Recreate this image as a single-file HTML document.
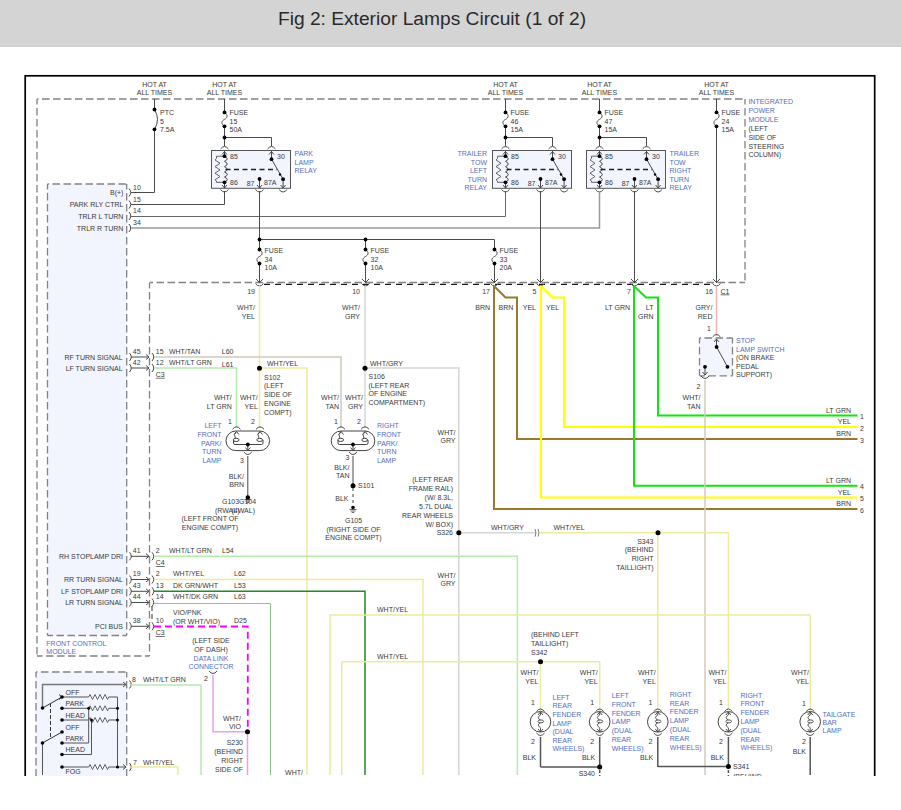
<!DOCTYPE html>
<html><head><meta charset="utf-8">
<style>
html,body{margin:0;padding:0;background:#fff;width:901px;height:810px;overflow:hidden}
#hdr{position:absolute;left:0;top:0;width:901px;height:46px;background:#d4d4d4;border-bottom:1px solid #cdcdcd}
#hdr div{position:absolute;left:0;width:864px;top:8px;line-height:22px;text-align:center;font-family:"Liberation Sans",sans-serif;font-size:19.2px;color:#2a2a2a}
#dg{position:absolute;left:0;top:0;width:901px;height:810px;background:#fff}
#clip{position:absolute;left:0;top:46px;width:901px;height:730px;overflow:hidden}
svg text{font-family:"Liberation Sans",sans-serif}
</style></head><body>
<div id="hdr"><div>Fig 2: Exterior Lamps Circuit (1 of 2)</div></div>
<div id="clip"><svg width="901" height="810" viewBox="0 0 901 810" style="position:absolute;left:0;top:-46px">
<rect x="25.2" y="75.8" width="849.5" height="760" fill="none" stroke="#000" stroke-width="1.7"/>
<line x1="37" y1="99" x2="745" y2="99" stroke="#828282" stroke-width="1.3" stroke-dasharray="7.5,3.5" stroke-dashoffset="6"/>
<line x1="37" y1="99" x2="37" y2="656" stroke="#828282" stroke-width="1.3" stroke-dasharray="7.5,3.5" stroke-dashoffset="2"/>
<line x1="745" y1="99" x2="745" y2="283" stroke="#828282" stroke-width="1.3" stroke-dasharray="7.5,3.5" stroke-dashoffset="2"/>
<line x1="745" y1="282.5" x2="149.5" y2="282.5" stroke="#828282" stroke-width="1.3" stroke-dasharray="7.5,3.5" stroke-dashoffset="2"/>
<line x1="264" y1="284.3" x2="712" y2="284.3" stroke="#1a1a1a" stroke-width="1.3" stroke-dasharray="6,5"/>
<line x1="149.5" y1="283" x2="149.5" y2="656" stroke="#828282" stroke-width="1.3" stroke-dasharray="7.5,3.5" stroke-dashoffset="2"/>
<line x1="37" y1="656" x2="149.5" y2="656" stroke="#828282" stroke-width="1.3" stroke-dasharray="7.5,3.5" stroke-dashoffset="2"/>
<rect x="47.5" y="184" width="79.2" height="451.5" fill="#f2f4fe" stroke="none" stroke-width="0"/>
<line x1="47.5" y1="184" x2="126.7" y2="184" stroke="#828282" stroke-width="1.3" stroke-dasharray="7.5,3.5" stroke-dashoffset="6"/>
<line x1="47.5" y1="184" x2="47.5" y2="635.5" stroke="#828282" stroke-width="1.3" stroke-dasharray="7.5,3.5" stroke-dashoffset="2"/>
<line x1="126.7" y1="184" x2="126.7" y2="635.5" stroke="#828282" stroke-width="1.3" stroke-dasharray="7.5,3.5" stroke-dashoffset="2"/>
<line x1="47.5" y1="635.5" x2="126.7" y2="635.5" stroke="#828282" stroke-width="1.3" stroke-dasharray="7.5,3.5" stroke-dashoffset="2"/>
<rect x="36" y="672" width="90.7" height="140" fill="#f2f4fe" stroke="none" stroke-width="0"/>
<line x1="36" y1="672" x2="126.7" y2="672" stroke="#828282" stroke-width="1.3" stroke-dasharray="7.5,3.5" stroke-dashoffset="6"/>
<line x1="36" y1="672" x2="36" y2="812" stroke="#828282" stroke-width="1.3" stroke-dasharray="7.5,3.5" stroke-dashoffset="2"/>
<line x1="126.7" y1="672" x2="126.7" y2="812" stroke="#828282" stroke-width="1.3" stroke-dasharray="7.5,3.5" stroke-dashoffset="2"/>
<line x1="36" y1="812" x2="126.7" y2="812" stroke="#828282" stroke-width="1.3" stroke-dasharray="7.5,3.5" stroke-dashoffset="2"/>
<rect x="699.5" y="338" width="33.0" height="37.80000000000001" fill="#f2f4fe" stroke="none" stroke-width="0"/>
<line x1="699.5" y1="338" x2="732.5" y2="338" stroke="#828282" stroke-width="1.3" stroke-dasharray="7.5,3.5" stroke-dashoffset="6"/>
<line x1="699.5" y1="338" x2="699.5" y2="375.8" stroke="#828282" stroke-width="1.3" stroke-dasharray="7.5,3.5" stroke-dashoffset="2"/>
<line x1="732.5" y1="338" x2="732.5" y2="375.8" stroke="#828282" stroke-width="1.3" stroke-dasharray="7.5,3.5" stroke-dashoffset="2"/>
<line x1="699.5" y1="375.8" x2="732.5" y2="375.8" stroke="#828282" stroke-width="1.3" stroke-dasharray="7.5,3.5" stroke-dashoffset="2"/>
<text x="154.5" y="87.0" text-anchor="middle" fill="#3a3a3a" font-size="7">HOT AT</text>
<text x="154.5" y="95.0" text-anchor="middle" fill="#3a3a3a" font-size="7">ALL TIMES</text>
<line x1="154.5" y1="99" x2="154.5" y2="109.5" stroke="#4a4a4a" stroke-width="1"/>
<text x="224.5" y="87.0" text-anchor="middle" fill="#3a3a3a" font-size="7">HOT AT</text>
<text x="224.5" y="95.0" text-anchor="middle" fill="#3a3a3a" font-size="7">ALL TIMES</text>
<line x1="224.5" y1="99" x2="224.5" y2="112.4" stroke="#4a4a4a" stroke-width="1"/>
<text x="505.5" y="87.0" text-anchor="middle" fill="#3a3a3a" font-size="7">HOT AT</text>
<text x="505.5" y="95.0" text-anchor="middle" fill="#3a3a3a" font-size="7">ALL TIMES</text>
<line x1="505.5" y1="99" x2="505.5" y2="112.4" stroke="#4a4a4a" stroke-width="1"/>
<text x="599.5" y="87.0" text-anchor="middle" fill="#3a3a3a" font-size="7">HOT AT</text>
<text x="599.5" y="95.0" text-anchor="middle" fill="#3a3a3a" font-size="7">ALL TIMES</text>
<line x1="599.5" y1="99" x2="599.5" y2="112.4" stroke="#4a4a4a" stroke-width="1"/>
<text x="716.5" y="87.0" text-anchor="middle" fill="#3a3a3a" font-size="7">HOT AT</text>
<text x="716.5" y="95.0" text-anchor="middle" fill="#3a3a3a" font-size="7">ALL TIMES</text>
<line x1="716.5" y1="99" x2="716.5" y2="112.4" stroke="#4a4a4a" stroke-width="1"/>
<path d="M154.5,109.5 Q160.5,119.4 154.5,129.3" fill="none" stroke="#4a4a4a" stroke-width="1"/>
<text x="160" y="115.0" text-anchor="start" fill="#3a3a3a" font-size="7">PTC</text>
<text x="160" y="123.5" text-anchor="start" fill="#3a3a3a" font-size="7">5</text>
<text x="160" y="132.0" text-anchor="start" fill="#3a3a3a" font-size="7">7.5A</text>
<polyline points="154.5,129.3 154.5,192.5 131,192.5" fill="none" stroke="#4a4a4a" stroke-width="1"/>
<path d="M224.5,112.4 C228.3,114.9 227.5,117.85 224.5,119.35 C221.5,120.85 220.7,123.8 224.5,126.3" fill="none" stroke="#4a4a4a" stroke-width="1"/>
<text x="229.5" y="115.0" text-anchor="start" fill="#3a3a3a" font-size="7">FUSE</text>
<text x="229.5" y="123.5" text-anchor="start" fill="#3a3a3a" font-size="7">15</text>
<text x="229.5" y="132.0" text-anchor="start" fill="#3a3a3a" font-size="7">50A</text>
<path d="M505.5,112.4 C509.3,114.9 508.5,117.85 505.5,119.35 C502.5,120.85 501.7,123.8 505.5,126.3" fill="none" stroke="#4a4a4a" stroke-width="1"/>
<text x="510.5" y="115.0" text-anchor="start" fill="#3a3a3a" font-size="7">FUSE</text>
<text x="510.5" y="123.5" text-anchor="start" fill="#3a3a3a" font-size="7">46</text>
<text x="510.5" y="132.0" text-anchor="start" fill="#3a3a3a" font-size="7">15A</text>
<path d="M599.5,112.4 C603.3,114.9 602.5,117.85 599.5,119.35 C596.5,120.85 595.7,123.8 599.5,126.3" fill="none" stroke="#4a4a4a" stroke-width="1"/>
<text x="604.5" y="115.0" text-anchor="start" fill="#3a3a3a" font-size="7">FUSE</text>
<text x="604.5" y="123.5" text-anchor="start" fill="#3a3a3a" font-size="7">47</text>
<text x="604.5" y="132.0" text-anchor="start" fill="#3a3a3a" font-size="7">15A</text>
<path d="M716.5,112.4 C720.3,114.9 719.5,117.85 716.5,119.35 C713.5,120.85 712.7,123.8 716.5,126.3" fill="none" stroke="#4a4a4a" stroke-width="1"/>
<text x="721.5" y="115.0" text-anchor="start" fill="#3a3a3a" font-size="7">FUSE</text>
<text x="721.5" y="123.5" text-anchor="start" fill="#3a3a3a" font-size="7">24</text>
<text x="721.5" y="132.0" text-anchor="start" fill="#3a3a3a" font-size="7">15A</text>
<rect x="211.5" y="150.5" width="79" height="37.8" fill="#f2f4fe" stroke="#555" stroke-width="1"/>
<line x1="224.5" y1="126.3" x2="224.5" y2="146" stroke="#4a4a4a" stroke-width="1"/>
<polyline points="224.5,137.5 271.5,137.5 271.5,146" fill="none" stroke="#4a4a4a" stroke-width="1"/>
<path d="M220.5,149 Q224.5,144 228.5,149" fill="none" stroke="#4a4a4a" stroke-width="1"/>
<path d="M267.5,149 Q271.5,144 275.5,149" fill="none" stroke="#4a4a4a" stroke-width="1"/>
<line x1="224.5" y1="150.5" x2="224.5" y2="156.2" stroke="#4a4a4a" stroke-width="1"/>
<line x1="224.5" y1="182.3" x2="224.5" y2="188.3" stroke="#4a4a4a" stroke-width="1"/>
<polyline points="222.0,154.5 224.5,151.5 227.0,154.5" fill="none" stroke="#4a4a4a" stroke-width="1"/>
<polyline points="222.0,185 224.5,188 227.0,185" fill="none" stroke="#4a4a4a" stroke-width="1"/>
<polyline points="224.5,156.2 216.5,156.2 216.5,158.5 215.0,160.0 220.0,163.3 215.0,166.6 220.0,169.9 215.0,173.2 220.0,176.5 215.0,179.8 216.5,181 216.5,182.3 224.5,182.3" fill="none" stroke="#555" stroke-width="0.9"/>
<path d="M224.5,156.2 q5.5,2.6 0,5.22 q5.5,2.6 0,5.22 q5.5,2.6 0,5.22 q5.5,2.6 0,5.22 q5.5,2.6 0,5.22" fill="none" stroke="#444" stroke-width="1"/>
<line x1="225.5" y1="169.6" x2="277.0" y2="169.6" stroke="#222" stroke-width="1.5" stroke-dasharray="5,3.5"/>
<line x1="271.5" y1="150.5" x2="271.5" y2="159.2" stroke="#4a4a4a" stroke-width="1"/>
<polyline points="269.0,154.5 271.5,151.5 274.0,154.5" fill="none" stroke="#4a4a4a" stroke-width="1"/>
<line x1="271.5" y1="159.2" x2="283.1" y2="179.2" stroke="#4a4a4a" stroke-width="1"/>
<line x1="283.1" y1="179.2" x2="283.1" y2="188" stroke="#4a4a4a" stroke-width="1"/>
<polyline points="280.6,185 283.1,188 285.6,185" fill="none" stroke="#4a4a4a" stroke-width="1"/>
<line x1="259.5" y1="179" x2="259.5" y2="188" stroke="#4a4a4a" stroke-width="1"/>
<polyline points="257.0,185 259.5,188 262.0,185" fill="none" stroke="#4a4a4a" stroke-width="1"/>
<path d="M220.5,189.5 Q224.5,194.5 228.5,189.5" fill="none" stroke="#4a4a4a" stroke-width="1"/>
<path d="M255.5,189.5 Q259.5,194.5 263.5,189.5" fill="none" stroke="#4a4a4a" stroke-width="1"/>
<path d="M279.1,189.5 Q283.1,194.5 287.1,189.5" fill="none" stroke="#4a4a4a" stroke-width="1"/>
<text x="230.0" y="158.8" text-anchor="start" fill="#3a3a3a" font-size="7">85</text>
<text x="230.0" y="184.8" text-anchor="start" fill="#3a3a3a" font-size="7">86</text>
<text x="277.0" y="159.1" text-anchor="start" fill="#3a3a3a" font-size="7">30</text>
<text x="254.5" y="185.8" text-anchor="end" fill="#3a3a3a" font-size="7">87</text>
<text x="264.0" y="185.0" text-anchor="start" fill="#3a3a3a" font-size="7">87A</text>
<text x="294.5" y="156.2" text-anchor="start" fill="#5270c0" font-size="7">PARK</text>
<text x="294.5" y="164.7" text-anchor="start" fill="#5270c0" font-size="7">LAMP</text>
<text x="294.5" y="173.2" text-anchor="start" fill="#5270c0" font-size="7">RELAY</text>
<rect x="492.5" y="150.5" width="79" height="37.8" fill="#f2f4fe" stroke="#555" stroke-width="1"/>
<line x1="505.5" y1="126.3" x2="505.5" y2="146" stroke="#4a4a4a" stroke-width="1"/>
<polyline points="505.5,137.5 552.5,137.5 552.5,146" fill="none" stroke="#4a4a4a" stroke-width="1"/>
<path d="M501.5,149 Q505.5,144 509.5,149" fill="none" stroke="#4a4a4a" stroke-width="1"/>
<path d="M548.5,149 Q552.5,144 556.5,149" fill="none" stroke="#4a4a4a" stroke-width="1"/>
<line x1="505.5" y1="150.5" x2="505.5" y2="156.2" stroke="#4a4a4a" stroke-width="1"/>
<line x1="505.5" y1="182.3" x2="505.5" y2="188.3" stroke="#4a4a4a" stroke-width="1"/>
<polyline points="503.0,154.5 505.5,151.5 508.0,154.5" fill="none" stroke="#4a4a4a" stroke-width="1"/>
<polyline points="503.0,185 505.5,188 508.0,185" fill="none" stroke="#4a4a4a" stroke-width="1"/>
<polyline points="505.5,156.2 497.5,156.2 497.5,158.5 496.0,160.0 501.0,163.3 496.0,166.6 501.0,169.9 496.0,173.2 501.0,176.5 496.0,179.8 497.5,181 497.5,182.3 505.5,182.3" fill="none" stroke="#555" stroke-width="0.9"/>
<path d="M505.5,156.2 q5.5,2.6 0,5.22 q5.5,2.6 0,5.22 q5.5,2.6 0,5.22 q5.5,2.6 0,5.22 q5.5,2.6 0,5.22" fill="none" stroke="#444" stroke-width="1"/>
<line x1="506.5" y1="169.6" x2="558.0" y2="169.6" stroke="#222" stroke-width="1.5" stroke-dasharray="5,3.5"/>
<line x1="552.5" y1="150.5" x2="552.5" y2="159.2" stroke="#4a4a4a" stroke-width="1"/>
<polyline points="550.0,154.5 552.5,151.5 555.0,154.5" fill="none" stroke="#4a4a4a" stroke-width="1"/>
<line x1="552.5" y1="159.2" x2="564.1" y2="179.2" stroke="#4a4a4a" stroke-width="1"/>
<line x1="564.1" y1="179.2" x2="564.1" y2="188" stroke="#4a4a4a" stroke-width="1"/>
<polyline points="561.6,185 564.1,188 566.6,185" fill="none" stroke="#4a4a4a" stroke-width="1"/>
<line x1="540.5" y1="179" x2="540.5" y2="188" stroke="#4a4a4a" stroke-width="1"/>
<polyline points="538.0,185 540.5,188 543.0,185" fill="none" stroke="#4a4a4a" stroke-width="1"/>
<path d="M501.5,189.5 Q505.5,194.5 509.5,189.5" fill="none" stroke="#4a4a4a" stroke-width="1"/>
<path d="M536.5,189.5 Q540.5,194.5 544.5,189.5" fill="none" stroke="#4a4a4a" stroke-width="1"/>
<path d="M560.1,189.5 Q564.1,194.5 568.1,189.5" fill="none" stroke="#4a4a4a" stroke-width="1"/>
<text x="511.0" y="158.8" text-anchor="start" fill="#3a3a3a" font-size="7">85</text>
<text x="511.0" y="184.8" text-anchor="start" fill="#3a3a3a" font-size="7">86</text>
<text x="558.0" y="159.1" text-anchor="start" fill="#3a3a3a" font-size="7">30</text>
<text x="535.5" y="185.8" text-anchor="end" fill="#3a3a3a" font-size="7">87</text>
<text x="545.0" y="185.0" text-anchor="start" fill="#3a3a3a" font-size="7">87A</text>
<text x="487" y="156.2" text-anchor="end" fill="#5270c0" font-size="7">TRAILER</text>
<text x="487" y="164.7" text-anchor="end" fill="#5270c0" font-size="7">TOW</text>
<text x="487" y="173.2" text-anchor="end" fill="#5270c0" font-size="7">LEFT</text>
<text x="487" y="181.7" text-anchor="end" fill="#5270c0" font-size="7">TURN</text>
<text x="487" y="190.2" text-anchor="end" fill="#5270c0" font-size="7">RELAY</text>
<rect x="586.5" y="150.5" width="79" height="37.8" fill="#f2f4fe" stroke="#555" stroke-width="1"/>
<line x1="599.5" y1="126.3" x2="599.5" y2="146" stroke="#4a4a4a" stroke-width="1"/>
<polyline points="599.5,137.5 646.5,137.5 646.5,146" fill="none" stroke="#4a4a4a" stroke-width="1"/>
<path d="M595.5,149 Q599.5,144 603.5,149" fill="none" stroke="#4a4a4a" stroke-width="1"/>
<path d="M642.5,149 Q646.5,144 650.5,149" fill="none" stroke="#4a4a4a" stroke-width="1"/>
<line x1="599.5" y1="150.5" x2="599.5" y2="156.2" stroke="#4a4a4a" stroke-width="1"/>
<line x1="599.5" y1="182.3" x2="599.5" y2="188.3" stroke="#4a4a4a" stroke-width="1"/>
<polyline points="597.0,154.5 599.5,151.5 602.0,154.5" fill="none" stroke="#4a4a4a" stroke-width="1"/>
<polyline points="597.0,185 599.5,188 602.0,185" fill="none" stroke="#4a4a4a" stroke-width="1"/>
<polyline points="599.5,156.2 591.5,156.2 591.5,158.5 590.0,160.0 595.0,163.3 590.0,166.6 595.0,169.9 590.0,173.2 595.0,176.5 590.0,179.8 591.5,181 591.5,182.3 599.5,182.3" fill="none" stroke="#555" stroke-width="0.9"/>
<path d="M599.5,156.2 q5.5,2.6 0,5.22 q5.5,2.6 0,5.22 q5.5,2.6 0,5.22 q5.5,2.6 0,5.22 q5.5,2.6 0,5.22" fill="none" stroke="#444" stroke-width="1"/>
<line x1="600.5" y1="169.6" x2="652.0" y2="169.6" stroke="#222" stroke-width="1.5" stroke-dasharray="5,3.5"/>
<line x1="646.5" y1="150.5" x2="646.5" y2="159.2" stroke="#4a4a4a" stroke-width="1"/>
<polyline points="644.0,154.5 646.5,151.5 649.0,154.5" fill="none" stroke="#4a4a4a" stroke-width="1"/>
<line x1="646.5" y1="159.2" x2="658.1" y2="179.2" stroke="#4a4a4a" stroke-width="1"/>
<line x1="658.1" y1="179.2" x2="658.1" y2="188" stroke="#4a4a4a" stroke-width="1"/>
<polyline points="655.6,185 658.1,188 660.6,185" fill="none" stroke="#4a4a4a" stroke-width="1"/>
<line x1="634.5" y1="179" x2="634.5" y2="188" stroke="#4a4a4a" stroke-width="1"/>
<polyline points="632.0,185 634.5,188 637.0,185" fill="none" stroke="#4a4a4a" stroke-width="1"/>
<path d="M595.5,189.5 Q599.5,194.5 603.5,189.5" fill="none" stroke="#4a4a4a" stroke-width="1"/>
<path d="M630.5,189.5 Q634.5,194.5 638.5,189.5" fill="none" stroke="#4a4a4a" stroke-width="1"/>
<path d="M654.1,189.5 Q658.1,194.5 662.1,189.5" fill="none" stroke="#4a4a4a" stroke-width="1"/>
<text x="605.0" y="158.8" text-anchor="start" fill="#3a3a3a" font-size="7">85</text>
<text x="605.0" y="184.8" text-anchor="start" fill="#3a3a3a" font-size="7">86</text>
<text x="652.0" y="159.1" text-anchor="start" fill="#3a3a3a" font-size="7">30</text>
<text x="629.5" y="185.8" text-anchor="end" fill="#3a3a3a" font-size="7">87</text>
<text x="639.0" y="185.0" text-anchor="start" fill="#3a3a3a" font-size="7">87A</text>
<text x="669.5" y="156.2" text-anchor="start" fill="#5270c0" font-size="7">TRAILER</text>
<text x="669.5" y="164.7" text-anchor="start" fill="#5270c0" font-size="7">TOW</text>
<text x="669.5" y="173.2" text-anchor="start" fill="#5270c0" font-size="7">RIGHT</text>
<text x="669.5" y="181.7" text-anchor="start" fill="#5270c0" font-size="7">TURN</text>
<text x="669.5" y="190.2" text-anchor="start" fill="#5270c0" font-size="7">RELAY</text>
<text x="748.4" y="104.0" text-anchor="start" fill="#5270c0" font-size="7">INTEGRATED</text>
<text x="748.4" y="112.9" text-anchor="start" fill="#5270c0" font-size="7">POWER</text>
<text x="748.4" y="121.8" text-anchor="start" fill="#5270c0" font-size="7">MODULE</text>
<text x="748.4" y="130.7" text-anchor="start" fill="#3a3a3a" font-size="7">(LEFT</text>
<text x="748.4" y="139.6" text-anchor="start" fill="#3a3a3a" font-size="7">SIDE OF</text>
<text x="748.4" y="148.5" text-anchor="start" fill="#3a3a3a" font-size="7">STEERING</text>
<text x="748.4" y="157.4" text-anchor="start" fill="#3a3a3a" font-size="7">COLUMN)</text>
<text x="123.4" y="195.0" text-anchor="end" fill="#3a3a3a" font-size="7">B(+)</text>
<path d="M129,188.5 Q132.5,192.5 129,196.5" fill="none" stroke="#4a4a4a" stroke-width="1"/>
<text x="133" y="189.5" text-anchor="start" fill="#3a3a3a" font-size="7">10</text>
<text x="123.4" y="207.0" text-anchor="end" fill="#3a3a3a" font-size="7">PARK RLY CTRL</text>
<path d="M129,200.5 Q132.5,204.5 129,208.5" fill="none" stroke="#4a4a4a" stroke-width="1"/>
<text x="133" y="201.5" text-anchor="start" fill="#3a3a3a" font-size="7">15</text>
<text x="123.4" y="218.5" text-anchor="end" fill="#3a3a3a" font-size="7">TRLR L TURN</text>
<path d="M129,212 Q132.5,216 129,220" fill="none" stroke="#4a4a4a" stroke-width="1"/>
<text x="133" y="213.0" text-anchor="start" fill="#3a3a3a" font-size="7">14</text>
<text x="123.4" y="230.5" text-anchor="end" fill="#3a3a3a" font-size="7">TRLR R TURN</text>
<path d="M129,224 Q132.5,228 129,232" fill="none" stroke="#4a4a4a" stroke-width="1"/>
<text x="133" y="225.0" text-anchor="start" fill="#3a3a3a" font-size="7">34</text>
<polyline points="131,204.5 224.5,204.5 224.5,191" fill="none" stroke="#4a4a4a" stroke-width="1"/>
<polyline points="131,216.5 505.5,216.5 505.5,191" fill="none" stroke="#666" stroke-width="1"/>
<polyline points="131,228 599.5,228 599.5,191" fill="none" stroke="#999" stroke-width="1.5"/>
<line x1="259.5" y1="191" x2="259.5" y2="249.5" stroke="#4a4a4a" stroke-width="1"/>
<line x1="259.5" y1="263.5" x2="259.5" y2="283" stroke="#4a4a4a" stroke-width="1"/>
<polyline points="259.5,239.5 494.5,239.5 494.5,249.5" fill="none" stroke="#4a4a4a" stroke-width="1"/>
<line x1="494.5" y1="263.5" x2="494.5" y2="283" stroke="#4a4a4a" stroke-width="1"/>
<line x1="365.5" y1="239.5" x2="365.5" y2="249.5" stroke="#4a4a4a" stroke-width="1"/>
<line x1="365.5" y1="263.5" x2="365.5" y2="283" stroke="#4a4a4a" stroke-width="1"/>
<path d="M259.5,249.5 C263.3,252.0 262.5,255.0 259.5,256.5 C256.5,258.0 255.7,261.0 259.5,263.5" fill="none" stroke="#4a4a4a" stroke-width="1"/>
<text x="264.5" y="253.0" text-anchor="start" fill="#3a3a3a" font-size="7">FUSE</text>
<text x="264.5" y="261.5" text-anchor="start" fill="#3a3a3a" font-size="7">34</text>
<text x="264.5" y="270.0" text-anchor="start" fill="#3a3a3a" font-size="7">10A</text>
<polyline points="256.0,279.0 259.5,282.5 263.0,279.0" fill="none" stroke="#4a4a4a" stroke-width="1"/>
<path d="M255.5,283.5 Q259.5,288.5 263.5,283.5" fill="none" stroke="#4a4a4a" stroke-width="1"/>
<path d="M365.5,249.5 C369.3,252.0 368.5,255.0 365.5,256.5 C362.5,258.0 361.7,261.0 365.5,263.5" fill="none" stroke="#4a4a4a" stroke-width="1"/>
<text x="370.5" y="253.0" text-anchor="start" fill="#3a3a3a" font-size="7">FUSE</text>
<text x="370.5" y="261.5" text-anchor="start" fill="#3a3a3a" font-size="7">32</text>
<text x="370.5" y="270.0" text-anchor="start" fill="#3a3a3a" font-size="7">10A</text>
<polyline points="362.0,279.0 365.5,282.5 369.0,279.0" fill="none" stroke="#4a4a4a" stroke-width="1"/>
<path d="M361.5,283.5 Q365.5,288.5 369.5,283.5" fill="none" stroke="#4a4a4a" stroke-width="1"/>
<path d="M494.5,249.5 C498.3,252.0 497.5,255.0 494.5,256.5 C491.5,258.0 490.7,261.0 494.5,263.5" fill="none" stroke="#4a4a4a" stroke-width="1"/>
<text x="499.5" y="253.0" text-anchor="start" fill="#3a3a3a" font-size="7">FUSE</text>
<text x="499.5" y="261.5" text-anchor="start" fill="#3a3a3a" font-size="7">33</text>
<text x="499.5" y="270.0" text-anchor="start" fill="#3a3a3a" font-size="7">20A</text>
<polyline points="491.0,279.0 494.5,282.5 498.0,279.0" fill="none" stroke="#4a4a4a" stroke-width="1"/>
<path d="M490.5,283.5 Q494.5,288.5 498.5,283.5" fill="none" stroke="#4a4a4a" stroke-width="1"/>
<line x1="540.5" y1="191" x2="540.5" y2="283" stroke="#4a4a4a" stroke-width="1"/>
<polyline points="537.0,279.0 540.5,282.5 544.0,279.0" fill="none" stroke="#4a4a4a" stroke-width="1"/>
<path d="M536.5,283.5 Q540.5,288.5 544.5,283.5" fill="none" stroke="#4a4a4a" stroke-width="1"/>
<line x1="634.5" y1="191" x2="634.5" y2="283" stroke="#4a4a4a" stroke-width="1"/>
<polyline points="631.0,279.0 634.5,282.5 638.0,279.0" fill="none" stroke="#4a4a4a" stroke-width="1"/>
<path d="M630.5,283.5 Q634.5,288.5 638.5,283.5" fill="none" stroke="#4a4a4a" stroke-width="1"/>
<line x1="716.5" y1="126.3" x2="716.5" y2="283" stroke="#4a4a4a" stroke-width="1"/>
<polyline points="713.0,279.0 716.5,282.5 720.0,279.0" fill="none" stroke="#4a4a4a" stroke-width="1"/>
<path d="M712.5,283.5 Q716.5,288.5 720.5,283.5" fill="none" stroke="#4a4a4a" stroke-width="1"/>
<text x="255" y="293.5" text-anchor="end" fill="#3a3a3a" font-size="7">19</text>
<text x="360" y="293.5" text-anchor="end" fill="#3a3a3a" font-size="7">10</text>
<text x="490" y="293.5" text-anchor="end" fill="#3a3a3a" font-size="7">17</text>
<text x="536.5" y="293.5" text-anchor="end" fill="#3a3a3a" font-size="7">5</text>
<text x="631" y="293.5" text-anchor="end" fill="#3a3a3a" font-size="7">7</text>
<text x="713" y="293.5" text-anchor="end" fill="#3a3a3a" font-size="7">16</text>
<text x="720.5" y="293.5" text-anchor="start" fill="#3a3a3a" font-size="7" text-decoration="underline">C1</text>
<line x1="259.5" y1="286" x2="259.5" y2="368" stroke="#ecec9c" stroke-width="1.5"/>
<line x1="365" y1="286" x2="365" y2="368" stroke="#d6d6d6" stroke-width="1.5"/>
<polyline points="494,286 494,509 857.5,509" fill="none" stroke="#9a7a2a" stroke-width="2"/>
<polyline points="494,286 505.5,297.5 517,297.5 517,439 857.5,439" fill="none" stroke="#9a7a2a" stroke-width="2"/>
<polyline points="541,286 541,497.5 857.5,497.5" fill="none" stroke="#ffff00" stroke-width="2"/>
<polyline points="541,286 552.5,297.5 564,297.5 564,427 857.5,427" fill="none" stroke="#ffff00" stroke-width="2"/>
<polyline points="634,286 634,485.8 857.5,485.8" fill="none" stroke="#0be80b" stroke-width="2"/>
<polyline points="634,286 646,297.5 658,297.5 658,415.5 857.5,415.5" fill="none" stroke="#0be80b" stroke-width="2"/>
<text x="851" y="412.5" text-anchor="end" fill="#3a3a3a" font-size="7">LT GRN</text>
<text x="860" y="419.0" text-anchor="start" fill="#3a3a3a" font-size="7">1</text>
<text x="851" y="424.0" text-anchor="end" fill="#3a3a3a" font-size="7">YEL</text>
<text x="860" y="430.5" text-anchor="start" fill="#3a3a3a" font-size="7">2</text>
<text x="851" y="436.0" text-anchor="end" fill="#3a3a3a" font-size="7">BRN</text>
<text x="860" y="442.5" text-anchor="start" fill="#3a3a3a" font-size="7">3</text>
<text x="851" y="482.8" text-anchor="end" fill="#3a3a3a" font-size="7">LT GRN</text>
<text x="860" y="489.3" text-anchor="start" fill="#3a3a3a" font-size="7">4</text>
<text x="851" y="494.5" text-anchor="end" fill="#3a3a3a" font-size="7">YEL</text>
<text x="860" y="501.0" text-anchor="start" fill="#3a3a3a" font-size="7">5</text>
<text x="851" y="506.0" text-anchor="end" fill="#3a3a3a" font-size="7">BRN</text>
<text x="860" y="512.5" text-anchor="start" fill="#3a3a3a" font-size="7">6</text>
<text x="490" y="310.0" text-anchor="end" fill="#3a3a3a" font-size="7">BRN</text>
<text x="498.5" y="310.0" text-anchor="start" fill="#3a3a3a" font-size="7">BRN</text>
<text x="536" y="310.0" text-anchor="end" fill="#3a3a3a" font-size="7">YEL</text>
<text x="546" y="310.0" text-anchor="start" fill="#3a3a3a" font-size="7">YEL</text>
<text x="630" y="310.0" text-anchor="end" fill="#3a3a3a" font-size="7">LT GRN</text>
<text x="653.5" y="310.0" text-anchor="end" fill="#3a3a3a" font-size="7">LT</text>
<text x="653.5" y="318.8" text-anchor="end" fill="#3a3a3a" font-size="7">GRN</text>
<text x="255" y="310.0" text-anchor="end" fill="#3a3a3a" font-size="7">WHT/</text>
<text x="255" y="318.8" text-anchor="end" fill="#3a3a3a" font-size="7">YEL</text>
<text x="360" y="310.0" text-anchor="end" fill="#3a3a3a" font-size="7">WHT/</text>
<text x="360" y="318.5" text-anchor="end" fill="#3a3a3a" font-size="7">GRY</text>
<text x="712.5" y="310.0" text-anchor="end" fill="#3a3a3a" font-size="7">GRY/</text>
<text x="712.5" y="318.5" text-anchor="end" fill="#3a3a3a" font-size="7">RED</text>
<line x1="716.5" y1="286" x2="716.5" y2="336" stroke="#f0b4b4" stroke-width="1.5"/>
<text x="711" y="331.0" text-anchor="end" fill="#3a3a3a" font-size="7">1</text>
<path d="M712.5,337 Q716.5,332 720.5,337" fill="none" stroke="#4a4a4a" stroke-width="1"/>
<polyline points="714.0,342 716.5,339 719.0,342" fill="none" stroke="#4a4a4a" stroke-width="1"/>
<line x1="716.5" y1="339" x2="716.5" y2="347" stroke="#4a4a4a" stroke-width="1"/>
<line x1="716.6" y1="347" x2="727.5" y2="366.8" stroke="#4a4a4a" stroke-width="1"/>
<line x1="705" y1="366.8" x2="705" y2="375" stroke="#4a4a4a" stroke-width="1"/>
<polyline points="702.5,372 705,375 707.5,372" fill="none" stroke="#4a4a4a" stroke-width="1"/>
<path d="M701,376 Q705,381 709,376" fill="none" stroke="#4a4a4a" stroke-width="1"/>
<text x="736" y="343.0" text-anchor="start" fill="#5270c0" font-size="7">STOP</text>
<text x="736" y="351.6" text-anchor="start" fill="#5270c0" font-size="7">LAMP SWITCH</text>
<text x="736" y="360.2" text-anchor="start" fill="#3a3a3a" font-size="7">(ON BRAKE</text>
<text x="736" y="368.8" text-anchor="start" fill="#3a3a3a" font-size="7">PEDAL</text>
<text x="736" y="377.4" text-anchor="start" fill="#3a3a3a" font-size="7">SUPPORT)</text>
<text x="700.5" y="389.0" text-anchor="end" fill="#3a3a3a" font-size="7">2</text>
<text x="700.5" y="400.0" text-anchor="end" fill="#3a3a3a" font-size="7">WHT/</text>
<text x="700.5" y="408.8" text-anchor="end" fill="#3a3a3a" font-size="7">TAN</text>
<line x1="705" y1="380" x2="705" y2="775" stroke="#d2cabb" stroke-width="1.5"/>
<text x="122.7" y="359.5" text-anchor="end" fill="#3a3a3a" font-size="7">RF TURN SIGNAL</text>
<path d="M129.5,353 Q133.0,357 129.5,361" fill="none" stroke="#4a4a4a" stroke-width="1"/>
<line x1="131" y1="357" x2="149" y2="357" stroke="#4a4a4a" stroke-width="1"/>
<polyline points="146,354.5 149,357 146,359.5" fill="none" stroke="#4a4a4a" stroke-width="1"/>
<path d="M152,353 Q155.5,357 152,361" fill="none" stroke="#4a4a4a" stroke-width="1"/>
<text x="132.8" y="353.7" text-anchor="start" fill="#3a3a3a" font-size="7">45</text>
<text x="122.7" y="370.5" text-anchor="end" fill="#3a3a3a" font-size="7">LF TURN SIGNAL</text>
<path d="M129.5,364 Q133.0,368 129.5,372" fill="none" stroke="#4a4a4a" stroke-width="1"/>
<line x1="131" y1="368" x2="149" y2="368" stroke="#4a4a4a" stroke-width="1"/>
<polyline points="146,365.5 149,368 146,370.5" fill="none" stroke="#4a4a4a" stroke-width="1"/>
<path d="M152,364 Q155.5,368 152,372" fill="none" stroke="#4a4a4a" stroke-width="1"/>
<text x="132.8" y="364.7" text-anchor="start" fill="#3a3a3a" font-size="7">42</text>
<text x="155.8" y="353.9" text-anchor="start" fill="#3a3a3a" font-size="7">15</text>
<text x="168.9" y="353.9" text-anchor="start" fill="#3a3a3a" font-size="7">WHT/TAN</text>
<text x="221.8" y="353.9" text-anchor="start" fill="#3a3a3a" font-size="7">L60</text>
<text x="155.8" y="364.7" text-anchor="start" fill="#3a3a3a" font-size="7">12</text>
<text x="168.9" y="364.7" text-anchor="start" fill="#3a3a3a" font-size="7">WHT/LT GRN</text>
<text x="221.8" y="367.0" text-anchor="start" fill="#3a3a3a" font-size="7">L61</text>
<text x="155.8" y="376.8" text-anchor="start" fill="#3a3a3a" font-size="7" text-decoration="underline">C3</text>
<polyline points="154,357 341,357 341,428" fill="none" stroke="#d2cabb" stroke-width="1.5"/>
<polyline points="154,368 236.5,368 236.5,428" fill="none" stroke="#b4ecac" stroke-width="1.5"/>
<line x1="259.5" y1="368" x2="259.5" y2="428" stroke="#ecec9c" stroke-width="1.5"/>
<polyline points="259.5,368 307,368 307,775" fill="none" stroke="#ecec9c" stroke-width="1.5"/>
<text x="267" y="366.2" text-anchor="start" fill="#3a3a3a" font-size="7">WHT/YEL</text>
<text x="264" y="379.5" text-anchor="start" fill="#3a3a3a" font-size="7">S102</text>
<text x="264" y="388.3" text-anchor="start" fill="#3a3a3a" font-size="7">(LEFT</text>
<text x="264" y="397.1" text-anchor="start" fill="#3a3a3a" font-size="7">SIDE OF</text>
<text x="264" y="405.9" text-anchor="start" fill="#3a3a3a" font-size="7">ENGINE</text>
<text x="264" y="414.7" text-anchor="start" fill="#3a3a3a" font-size="7">COMPT)</text>
<line x1="365" y1="368" x2="365" y2="428" stroke="#d6d6d6" stroke-width="1.5"/>
<polyline points="365,368 458.8,368 458.8,775" fill="none" stroke="#d6d6d6" stroke-width="1.5"/>
<text x="370" y="366.2" text-anchor="start" fill="#3a3a3a" font-size="7">WHT/GRY</text>
<text x="368.5" y="379.2" text-anchor="start" fill="#3a3a3a" font-size="7">S106</text>
<text x="368.5" y="387.8" text-anchor="start" fill="#3a3a3a" font-size="7">(LEFT REAR</text>
<text x="368.5" y="396.4" text-anchor="start" fill="#3a3a3a" font-size="7">OF ENGINE</text>
<text x="368.5" y="405.0" text-anchor="start" fill="#3a3a3a" font-size="7">COMPARTMENT)</text>
<text x="231.8" y="400.4" text-anchor="end" fill="#3a3a3a" font-size="7">WHT/</text>
<text x="231.8" y="409.2" text-anchor="end" fill="#3a3a3a" font-size="7">LT GRN</text>
<text x="257.8" y="400.4" text-anchor="end" fill="#3a3a3a" font-size="7">WHT/</text>
<text x="257.8" y="409.2" text-anchor="end" fill="#3a3a3a" font-size="7">YEL</text>
<text x="339" y="400.4" text-anchor="end" fill="#3a3a3a" font-size="7">WHT/</text>
<text x="339" y="409.2" text-anchor="end" fill="#3a3a3a" font-size="7">TAN</text>
<text x="363" y="400.4" text-anchor="end" fill="#3a3a3a" font-size="7">WHT/</text>
<text x="363" y="409.2" text-anchor="end" fill="#3a3a3a" font-size="7">GRY</text>
<path d="M235.8,431 H259.8 A9.8,9.8 0 0 1 259.8,450.6 H235.8 A9.8,9.8 0 0 1 235.8,431 Z" fill="none" stroke="#444" stroke-width="1"/>
<path d="M232.5,429.3 Q236.5,424.3 240.5,429.3" fill="none" stroke="#4a4a4a" stroke-width="1"/>
<path d="M256,429.3 Q260,424.3 264,429.3" fill="none" stroke="#4a4a4a" stroke-width="1"/>
<polyline points="234.0,434.5 236.5,431.5 239.0,434.5" fill="none" stroke="#4a4a4a" stroke-width="1"/>
<path d="M236.5,431.5 Q233.0,434.5 235.5,438.3" fill="none" stroke="#444" stroke-width="0.9"/>
<ellipse cx="236.2" cy="439.9" rx="2.9" ry="1.6" fill="none" stroke="#444" stroke-width="1"/>
<polyline points="257.5,434.5 260,431.5 262.5,434.5" fill="none" stroke="#4a4a4a" stroke-width="1"/>
<path d="M260,431.5 Q256.5,434.5 259,438.3" fill="none" stroke="#444" stroke-width="0.9"/>
<ellipse cx="259.7" cy="439.9" rx="2.9" ry="1.6" fill="none" stroke="#444" stroke-width="1"/>
<path d="M233.5,440 V443 Q233.5,444.5 235.0,444.5 H261.5 Q263,444.5 263,443 V440" fill="none" stroke="#444" stroke-width="1"/>
<line x1="247.8" y1="444.5" x2="247.8" y2="450.6" stroke="#4a4a4a" stroke-width="1"/>
<polyline points="245.3,447.5 247.8,450.5 250.3,447.5" fill="none" stroke="#4a4a4a" stroke-width="1"/>
<path d="M243.8,452 Q247.8,457 251.8,452" fill="none" stroke="#4a4a4a" stroke-width="1"/>
<path d="M341,431 H365 A9.8,9.8 0 0 1 365,450.6 H341 A9.8,9.8 0 0 1 341,431 Z" fill="none" stroke="#444" stroke-width="1"/>
<path d="M337,429.3 Q341,424.3 345,429.3" fill="none" stroke="#4a4a4a" stroke-width="1"/>
<path d="M361,429.3 Q365,424.3 369,429.3" fill="none" stroke="#4a4a4a" stroke-width="1"/>
<polyline points="338.5,434.5 341,431.5 343.5,434.5" fill="none" stroke="#4a4a4a" stroke-width="1"/>
<path d="M341,431.5 Q337.5,434.5 340,438.3" fill="none" stroke="#444" stroke-width="0.9"/>
<ellipse cx="340.7" cy="439.9" rx="2.9" ry="1.6" fill="none" stroke="#444" stroke-width="1"/>
<polyline points="362.5,434.5 365,431.5 367.5,434.5" fill="none" stroke="#4a4a4a" stroke-width="1"/>
<path d="M365,431.5 Q361.5,434.5 364,438.3" fill="none" stroke="#444" stroke-width="0.9"/>
<ellipse cx="364.7" cy="439.9" rx="2.9" ry="1.6" fill="none" stroke="#444" stroke-width="1"/>
<path d="M338,440 V443 Q338,444.5 339.5,444.5 H366.5 Q368,444.5 368,443 V440" fill="none" stroke="#444" stroke-width="1"/>
<line x1="353" y1="444.5" x2="353" y2="450.6" stroke="#4a4a4a" stroke-width="1"/>
<polyline points="350.5,447.5 353,450.5 355.5,447.5" fill="none" stroke="#4a4a4a" stroke-width="1"/>
<path d="M349,452 Q353,457 357,452" fill="none" stroke="#4a4a4a" stroke-width="1"/>
<text x="232" y="424.2" text-anchor="end" fill="#3a3a3a" font-size="7">1</text>
<text x="255" y="424.2" text-anchor="end" fill="#3a3a3a" font-size="7">2</text>
<text x="338" y="424.2" text-anchor="end" fill="#3a3a3a" font-size="7">1</text>
<text x="361" y="424.2" text-anchor="end" fill="#3a3a3a" font-size="7">2</text>
<text x="244" y="463.1" text-anchor="end" fill="#3a3a3a" font-size="7">3</text>
<text x="349.5" y="460.0" text-anchor="end" fill="#3a3a3a" font-size="7">3</text>
<text x="221.5" y="427.9" text-anchor="end" fill="#5270c0" font-size="7">LEFT</text>
<text x="221.5" y="436.7" text-anchor="end" fill="#5270c0" font-size="7">FRONT</text>
<text x="221.5" y="445.5" text-anchor="end" fill="#5270c0" font-size="7">PARK/</text>
<text x="221.5" y="454.3" text-anchor="end" fill="#5270c0" font-size="7">TURN</text>
<text x="221.5" y="463.1" text-anchor="end" fill="#5270c0" font-size="7">LAMP</text>
<text x="377" y="427.9" text-anchor="start" fill="#5270c0" font-size="7">RIGHT</text>
<text x="377" y="436.7" text-anchor="start" fill="#5270c0" font-size="7">FRONT</text>
<text x="377" y="445.5" text-anchor="start" fill="#5270c0" font-size="7">PARK/</text>
<text x="377" y="454.3" text-anchor="start" fill="#5270c0" font-size="7">TURN</text>
<text x="377" y="463.1" text-anchor="start" fill="#5270c0" font-size="7">LAMP</text>
<line x1="247.8" y1="456" x2="247.8" y2="497.4" stroke="#4a4a4a" stroke-width="1"/>
<text x="244" y="478.9" text-anchor="end" fill="#3a3a3a" font-size="7">BLK/</text>
<text x="244" y="487.1" text-anchor="end" fill="#3a3a3a" font-size="7">BRN</text>
<text x="222" y="503.8" text-anchor="start" fill="#3a3a3a" font-size="7">G103</text>
<text x="239" y="503.8" text-anchor="start" fill="#3a3a3a" font-size="7">G104</text>
<text x="215" y="512.8" text-anchor="start" fill="#3a3a3a" font-size="7">(RWAL)</text>
<text x="255" y="512.8" text-anchor="end" fill="#3a3a3a" font-size="7">(4WAL)</text>
<text x="210" y="521.2" text-anchor="middle" fill="#3a3a3a" font-size="7">(LEFT FRONT OF</text>
<text x="210" y="530.0" text-anchor="middle" fill="#3a3a3a" font-size="7">ENGINE COMPT)</text>
<line x1="353" y1="456" x2="353" y2="485.8" stroke="#4a4a4a" stroke-width="1"/>
<text x="349.5" y="470.0" text-anchor="end" fill="#3a3a3a" font-size="7">BLK/</text>
<text x="349.5" y="478.0" text-anchor="end" fill="#3a3a3a" font-size="7">TAN</text>
<text x="358" y="488.3" text-anchor="start" fill="#3a3a3a" font-size="7">S101</text>
<line x1="353" y1="488" x2="353" y2="503" stroke="#444" stroke-width="1" stroke-dasharray="3,3"/>
<text x="348.5" y="501.0" text-anchor="end" fill="#3a3a3a" font-size="7">BLK</text>
<line x1="244.3" y1="499.5" x2="251.3" y2="499.5" stroke="#444" stroke-width="0.8"/>
<line x1="245.3" y1="501" x2="250.3" y2="501" stroke="#444" stroke-width="0.8"/>
<line x1="246.5" y1="502.5" x2="249.10000000000002" y2="502.5" stroke="#444" stroke-width="0.8"/>
<line x1="349.5" y1="509.5" x2="356.5" y2="509.5" stroke="#444" stroke-width="0.8"/>
<line x1="350.5" y1="511" x2="355.5" y2="511" stroke="#444" stroke-width="0.8"/>
<line x1="351.7" y1="512.5" x2="354.3" y2="512.5" stroke="#444" stroke-width="0.8"/>
<text x="353.5" y="523.3" text-anchor="middle" fill="#3a3a3a" font-size="7">G105</text>
<text x="353.5" y="531.7" text-anchor="middle" fill="#3a3a3a" font-size="7">(RIGHT SIDE OF</text>
<text x="353.5" y="540.1" text-anchor="middle" fill="#3a3a3a" font-size="7">ENGINE COMPT)</text>
<text x="455.5" y="434.5" text-anchor="end" fill="#3a3a3a" font-size="7">WHT/</text>
<text x="455.5" y="443.0" text-anchor="end" fill="#3a3a3a" font-size="7">GRY</text>
<text x="453" y="482.0" text-anchor="end" fill="#3a3a3a" font-size="7">(LEFT REAR</text>
<text x="453" y="490.9" text-anchor="end" fill="#3a3a3a" font-size="7">FRAME RAIL)</text>
<text x="453" y="499.8" text-anchor="end" fill="#3a3a3a" font-size="7">(W/ 8.3L,</text>
<text x="453" y="508.7" text-anchor="end" fill="#3a3a3a" font-size="7">5.7L DUAL</text>
<text x="453" y="517.6" text-anchor="end" fill="#3a3a3a" font-size="7">REAR WHEELS</text>
<text x="453" y="526.5" text-anchor="end" fill="#3a3a3a" font-size="7">W/ BOX)</text>
<text x="453" y="535.4" text-anchor="end" fill="#3a3a3a" font-size="7">S326</text>
<line x1="458.8" y1="532.8" x2="536" y2="532.8" stroke="#d6d6d6" stroke-width="1.5"/>
<path d="M535,529 q2,3.8 0,7.6 M538,529 q2,3.8 0,7.6" fill="none" stroke="#555" stroke-width="0.8"/>
<polyline points="540,532.8 728.4,532.8 728.4,709" fill="none" stroke="#ecec9c" stroke-width="1.5"/>
<line x1="657.8" y1="532.8" x2="657.8" y2="709" stroke="#ecec9c" stroke-width="1.5"/>
<text x="491" y="529.5" text-anchor="start" fill="#3a3a3a" font-size="7">WHT/GRY</text>
<text x="553.5" y="529.5" text-anchor="start" fill="#3a3a3a" font-size="7">WHT/YEL</text>
<text x="653.5" y="543.5" text-anchor="end" fill="#3a3a3a" font-size="7">S343</text>
<text x="653.5" y="552.4" text-anchor="end" fill="#3a3a3a" font-size="7">(BEHIND</text>
<text x="653.5" y="561.3" text-anchor="end" fill="#3a3a3a" font-size="7">RIGHT</text>
<text x="653.5" y="570.2" text-anchor="end" fill="#3a3a3a" font-size="7">TAILLIGHT)</text>
<text x="123" y="558.8" text-anchor="end" fill="#3a3a3a" font-size="7">RH STOPLAMP DRI</text>
<path d="M129.5,552.3 Q133.0,556.3 129.5,560.3" fill="none" stroke="#4a4a4a" stroke-width="1"/>
<line x1="131" y1="556.3" x2="149" y2="556.3" stroke="#4a4a4a" stroke-width="1"/>
<polyline points="146,553.8 149,556.3 146,558.8" fill="none" stroke="#4a4a4a" stroke-width="1"/>
<path d="M152,552.3 Q155.5,556.3 152,560.3" fill="none" stroke="#4a4a4a" stroke-width="1"/>
<text x="132.8" y="553.0" text-anchor="start" fill="#3a3a3a" font-size="7">41</text>
<text x="155.8" y="553.0" text-anchor="start" fill="#3a3a3a" font-size="7">2</text>
<text x="169" y="553.0" text-anchor="start" fill="#3a3a3a" font-size="7">WHT/LT GRN</text>
<text x="222" y="553.0" text-anchor="start" fill="#3a3a3a" font-size="7">L54</text>
<text x="123" y="582.0" text-anchor="end" fill="#3a3a3a" font-size="7">RR TURN SIGNAL</text>
<path d="M129.5,575.5 Q133.0,579.5 129.5,583.5" fill="none" stroke="#4a4a4a" stroke-width="1"/>
<line x1="131" y1="579.5" x2="149" y2="579.5" stroke="#4a4a4a" stroke-width="1"/>
<polyline points="146,577.0 149,579.5 146,582.0" fill="none" stroke="#4a4a4a" stroke-width="1"/>
<path d="M152,575.5 Q155.5,579.5 152,583.5" fill="none" stroke="#4a4a4a" stroke-width="1"/>
<text x="132.8" y="576.2" text-anchor="start" fill="#3a3a3a" font-size="7">19</text>
<text x="155.8" y="576.2" text-anchor="start" fill="#3a3a3a" font-size="7">2</text>
<text x="173" y="576.2" text-anchor="start" fill="#3a3a3a" font-size="7">WHT/YEL</text>
<text x="234" y="576.2" text-anchor="start" fill="#3a3a3a" font-size="7">L62</text>
<text x="123" y="593.8" text-anchor="end" fill="#3a3a3a" font-size="7">LF STOPLAMP DRI</text>
<path d="M129.5,587.3 Q133.0,591.3 129.5,595.3" fill="none" stroke="#4a4a4a" stroke-width="1"/>
<line x1="131" y1="591.3" x2="149" y2="591.3" stroke="#4a4a4a" stroke-width="1"/>
<polyline points="146,588.8 149,591.3 146,593.8" fill="none" stroke="#4a4a4a" stroke-width="1"/>
<path d="M152,587.3 Q155.5,591.3 152,595.3" fill="none" stroke="#4a4a4a" stroke-width="1"/>
<text x="132.8" y="588.0" text-anchor="start" fill="#3a3a3a" font-size="7">43</text>
<text x="155.8" y="588.0" text-anchor="start" fill="#3a3a3a" font-size="7">13</text>
<text x="173" y="588.0" text-anchor="start" fill="#3a3a3a" font-size="7">DK GRN/WHT</text>
<text x="234" y="588.0" text-anchor="start" fill="#3a3a3a" font-size="7">L53</text>
<text x="123" y="605.0" text-anchor="end" fill="#3a3a3a" font-size="7">LR TURN SIGNAL</text>
<path d="M129.5,598.5 Q133.0,602.5 129.5,606.5" fill="none" stroke="#4a4a4a" stroke-width="1"/>
<line x1="131" y1="602.5" x2="149" y2="602.5" stroke="#4a4a4a" stroke-width="1"/>
<polyline points="146,600.0 149,602.5 146,605.0" fill="none" stroke="#4a4a4a" stroke-width="1"/>
<path d="M152,598.5 Q155.5,602.5 152,606.5" fill="none" stroke="#4a4a4a" stroke-width="1"/>
<text x="132.8" y="599.2" text-anchor="start" fill="#3a3a3a" font-size="7">44</text>
<text x="155.8" y="599.2" text-anchor="start" fill="#3a3a3a" font-size="7">14</text>
<text x="173" y="599.2" text-anchor="start" fill="#3a3a3a" font-size="7">WHT/DK GRN</text>
<text x="234" y="599.2" text-anchor="start" fill="#3a3a3a" font-size="7">L63</text>
<text x="123" y="628.8" text-anchor="end" fill="#3a3a3a" font-size="7">PCI BUS</text>
<path d="M129.5,622.3 Q133.0,626.3 129.5,630.3" fill="none" stroke="#4a4a4a" stroke-width="1"/>
<line x1="131" y1="626.3" x2="149" y2="626.3" stroke="#4a4a4a" stroke-width="1"/>
<polyline points="146,623.8 149,626.3 146,628.8" fill="none" stroke="#4a4a4a" stroke-width="1"/>
<path d="M152,622.3 Q155.5,626.3 152,630.3" fill="none" stroke="#4a4a4a" stroke-width="1"/>
<text x="132.8" y="623.0" text-anchor="start" fill="#3a3a3a" font-size="7">38</text>
<text x="155.8" y="623.0" text-anchor="start" fill="#3a3a3a" font-size="7">10</text>
<text x="234" y="623.0" text-anchor="start" fill="#3a3a3a" font-size="7">D25</text>
<text x="155.8" y="565.0" text-anchor="start" fill="#3a3a3a" font-size="7" text-decoration="underline">C4</text>
<text x="155.8" y="635.0" text-anchor="start" fill="#3a3a3a" font-size="7" text-decoration="underline">C3</text>
<line x1="152" y1="606" x2="152" y2="622" stroke="#333" stroke-width="1" stroke-dasharray="5,3"/>
<text x="173" y="615.0" text-anchor="start" fill="#3a3a3a" font-size="7">VIO/PNK</text>
<text x="173" y="623.5" text-anchor="start" fill="#3a3a3a" font-size="7">(OR WHT/VIO)</text>
<text x="46.3" y="646.2" text-anchor="start" fill="#5270c0" font-size="7">FRONT CONTROL</text>
<text x="46.3" y="654.2" text-anchor="start" fill="#5270c0" font-size="7">MODULE</text>
<polyline points="154,556.3 517.4,556.3 517.4,775" fill="none" stroke="#b4ecac" stroke-width="1.5"/>
<polyline points="154,579.5 423,579.5 423,775" fill="none" stroke="#ecec9c" stroke-width="1.5"/>
<polyline points="154,591.3 365,591.3 365,775" fill="none" stroke="#228a22" stroke-width="1.5"/>
<polyline points="154,603.5 270.5,603.5 270.5,775" fill="none" stroke="#8cc88c" stroke-width="1"/>
<polyline points="154,626.5 247.8,626.5 247.8,731.8" fill="none" stroke="#ff00ff" stroke-width="1.8" stroke-dasharray="7,4"/>
<line x1="247.5" y1="731.8" x2="247.5" y2="775" stroke="#eaa0ea" stroke-width="1.5"/>
<text x="211" y="643.3" text-anchor="middle" fill="#3a3a3a" font-size="7">(LEFT SIDE</text>
<text x="211" y="651.9" text-anchor="middle" fill="#3a3a3a" font-size="7">OF DASH)</text>
<text x="211" y="660.5" text-anchor="middle" fill="#5270c0" font-size="7">DATA LINK</text>
<text x="211" y="669.1" text-anchor="middle" fill="#5270c0" font-size="7">CONNECTOR</text>
<path d="M209,671 Q213,676 217,671" fill="none" stroke="#4a4a4a" stroke-width="1"/>
<polyline points="213,675 213,731.8 247.5,731.8" fill="none" stroke="#eaa0ea" stroke-width="1.5"/>
<text x="208" y="680.5" text-anchor="end" fill="#3a3a3a" font-size="7">2</text>
<text x="241" y="720.5" text-anchor="end" fill="#3a3a3a" font-size="7">WHT/</text>
<text x="241" y="728.8" text-anchor="end" fill="#3a3a3a" font-size="7">VIO</text>
<text x="243" y="745.3" text-anchor="end" fill="#3a3a3a" font-size="7">S230</text>
<text x="243" y="754.2" text-anchor="end" fill="#3a3a3a" font-size="7">(BEHIND</text>
<text x="243" y="763.1" text-anchor="end" fill="#3a3a3a" font-size="7">RIGHT</text>
<text x="243" y="772.0" text-anchor="end" fill="#3a3a3a" font-size="7">SIDE OF</text>
<text x="303" y="774.5" text-anchor="end" fill="#3a3a3a" font-size="7">WHT/</text>
<text x="441" y="434.5" text-anchor="end" fill="#3a3a3a" font-size="7"></text>
<text x="455.5" y="577.5" text-anchor="end" fill="#3a3a3a" font-size="7">WHT/</text>
<text x="455.5" y="586.0" text-anchor="end" fill="#3a3a3a" font-size="7">GRY</text>
<polyline points="330,775 330,615 810.2,615" fill="none" stroke="#ecec9c" stroke-width="1.5"/>
<line x1="810.2" y1="615" x2="810.2" y2="711" stroke="#ecec9c" stroke-width="1.5"/>
<text x="377" y="611.5" text-anchor="start" fill="#3a3a3a" font-size="7">WHT/YEL</text>
<polyline points="341.8,775 341.8,661.8 599.7,661.8 599.7,711" fill="none" stroke="#ecec9c" stroke-width="1.5"/>
<text x="377" y="658.5" text-anchor="start" fill="#3a3a3a" font-size="7">WHT/YEL</text>
<line x1="540.5" y1="661.8" x2="540.5" y2="711" stroke="#ecec9c" stroke-width="1.5"/>
<text x="531" y="637.0" text-anchor="start" fill="#3a3a3a" font-size="7">(BEHIND LEFT</text>
<text x="531" y="645.9" text-anchor="start" fill="#3a3a3a" font-size="7">TAILLIGHT)</text>
<text x="531" y="654.8" text-anchor="start" fill="#3a3a3a" font-size="7">S342</text>
<polyline points="42.5,708 42.5,684.5 126,684.5" fill="none" stroke="#777" stroke-width="1.4"/>
<polyline points="123,682.0 126,684.5 123,687.0" fill="none" stroke="#4a4a4a" stroke-width="1"/>
<path d="M129.5,680.5 Q133.0,684.5 129.5,688.5" fill="none" stroke="#4a4a4a" stroke-width="1"/>
<text x="132" y="682.0" text-anchor="start" fill="#3a3a3a" font-size="7">8</text>
<text x="143" y="682.0" text-anchor="start" fill="#3a3a3a" font-size="7">WHT/LT GRN</text>
<polyline points="131,685 201,685 201,775" fill="none" stroke="#b4ecac" stroke-width="1.5"/>
<text x="65.5" y="694.5" text-anchor="start" fill="#3a3a3a" font-size="7">OFF</text>
<text x="65.5" y="705.8" text-anchor="start" fill="#3a3a3a" font-size="7">PARK</text>
<text x="65.5" y="717.5" text-anchor="start" fill="#3a3a3a" font-size="7">HEAD</text>
<text x="65.5" y="729.5" text-anchor="start" fill="#3a3a3a" font-size="7">OFF</text>
<text x="65.5" y="740.5" text-anchor="start" fill="#3a3a3a" font-size="7">PARK</text>
<text x="65.5" y="752.0" text-anchor="start" fill="#3a3a3a" font-size="7">HEAD</text>
<text x="65.5" y="773.5" text-anchor="start" fill="#3a3a3a" font-size="7">FOG</text>
<line x1="42.5" y1="708" x2="62" y2="697" stroke="#333" stroke-width="1"/>
<polyline points="59,694.5 62,697 59,699.5" fill="none" stroke="#4a4a4a" stroke-width="1"/>
<line x1="42.5" y1="743" x2="62" y2="732" stroke="#333" stroke-width="1"/>
<line x1="42.5" y1="743" x2="42.5" y2="775" stroke="#555" stroke-width="1"/>
<line x1="50.5" y1="703" x2="50.5" y2="738" stroke="#333" stroke-width="1" stroke-dasharray="4,2"/>
<polyline points="62,697 88.7,697" fill="none" stroke="#555" stroke-width="1"/>
<path d="M88.7,697 L90.0,694.5 L92.5,699.5 L95.0,694.5 L97.5,699.5 L100.0,694.5 L102.5,699.5 L105.0,694.5 L107.5,699.5 L108.7,697" fill="none" stroke="#555" stroke-width="0.9"/>
<polyline points="108.7,697 117.5,697 117.5,767" fill="none" stroke="#555" stroke-width="1"/>
<polyline points="62,708.3 88.7,708.3" fill="none" stroke="#555" stroke-width="1"/>
<path d="M88.7,708.3 L90.0,705.8 L92.5,710.8 L95.0,705.8 L97.5,710.8 L100.0,705.8 L102.5,710.8 L105.0,705.8 L107.5,710.8 L108.7,708.3" fill="none" stroke="#555" stroke-width="0.9"/>
<line x1="108.7" y1="708.3" x2="117.5" y2="708.3" stroke="#555" stroke-width="1"/>
<polyline points="62,720 88.7,720" fill="none" stroke="#555" stroke-width="1"/>
<path d="M88.7,720 L90.0,717.5 L92.5,722.5 L95.0,717.5 L97.5,722.5 L100.0,717.5 L102.5,722.5 L105.0,717.5 L107.5,722.5 L108.7,720" fill="none" stroke="#555" stroke-width="0.9"/>
<line x1="108.7" y1="720" x2="117.5" y2="720" stroke="#555" stroke-width="1"/>
<polyline points="62,743 88.7,743 88.7,708.3" fill="none" stroke="#555" stroke-width="1"/>
<polyline points="62,754.5 91.5,754.5 91.5,720" fill="none" stroke="#555" stroke-width="1"/>
<polyline points="62,767 88.7,767" fill="none" stroke="#555" stroke-width="1"/>
<path d="M88.7,767 L90.0,764.5 L92.5,769.5 L95.0,764.5 L97.5,769.5 L100.0,764.5 L102.5,769.5 L105.0,764.5 L107.5,769.5 L108.7,767" fill="none" stroke="#555" stroke-width="0.9"/>
<line x1="108.7" y1="767" x2="126" y2="767" stroke="#555" stroke-width="1"/>
<polyline points="123,764.5 126,767 123,769.5" fill="none" stroke="#4a4a4a" stroke-width="1"/>
<path d="M129.5,763 Q133.0,767 129.5,771" fill="none" stroke="#4a4a4a" stroke-width="1"/>
<text x="133" y="764.5" text-anchor="start" fill="#3a3a3a" font-size="7">7</text>
<text x="143" y="764.5" text-anchor="start" fill="#3a3a3a" font-size="7">WHT/YEL</text>
<polyline points="131,767 178,767 178,775" fill="none" stroke="#ecec9c" stroke-width="1.5"/>
<circle cx="540.5" cy="721.8" r="10.3" fill="none" stroke="#444" stroke-width="1"/>
<path d="M536.5,711.5 Q540.5,706.5 544.5,711.5" fill="none" stroke="#4a4a4a" stroke-width="1"/>
<polyline points="538.0,715 540.5,712 543.0,715" fill="none" stroke="#4a4a4a" stroke-width="1"/>
<path d="M540.5,712 V715 Q536.0,717.5 540.5,720.2 M540.5,722.6 Q536.0,725 540.5,727.8 V732" fill="none" stroke="#444" stroke-width="0.9"/>
<ellipse cx="540.8" cy="721.4" rx="2.8" ry="1.5" fill="none" stroke="#444" stroke-width="0.9"/>
<polyline points="538.0,729 540.5,732 543.0,729" fill="none" stroke="#4a4a4a" stroke-width="1"/>
<path d="M536.5,733 Q540.5,738 544.5,733" fill="none" stroke="#4a4a4a" stroke-width="1"/>
<text x="552.5" y="699.8" text-anchor="start" fill="#5270c0" font-size="7">LEFT</text>
<text x="552.5" y="708.4" text-anchor="start" fill="#5270c0" font-size="7">REAR</text>
<text x="552.5" y="717.0" text-anchor="start" fill="#5270c0" font-size="7">FENDER</text>
<text x="552.5" y="725.6" text-anchor="start" fill="#5270c0" font-size="7">LAMP</text>
<text x="552.5" y="734.2" text-anchor="start" fill="#5270c0" font-size="7">(DUAL</text>
<text x="552.5" y="742.8" text-anchor="start" fill="#5270c0" font-size="7">REAR</text>
<text x="552.5" y="751.4" text-anchor="start" fill="#5270c0" font-size="7">WHEELS)</text>
<text x="535.0" y="705.2" text-anchor="end" fill="#3a3a3a" font-size="7">1</text>
<text x="535.0" y="744.0" text-anchor="end" fill="#3a3a3a" font-size="7">2</text>
<text x="538.5" y="675.3" text-anchor="end" fill="#3a3a3a" font-size="7">WHT/</text>
<text x="538.5" y="684.0" text-anchor="end" fill="#3a3a3a" font-size="7">YEL</text>
<text x="536.0" y="759.5" text-anchor="end" fill="#3a3a3a" font-size="7">BLK</text>
<line x1="540.5" y1="737" x2="540.5" y2="767" stroke="#555" stroke-width="1.5"/>
<circle cx="599.7" cy="721.8" r="10.3" fill="none" stroke="#444" stroke-width="1"/>
<path d="M595.7,711.5 Q599.7,706.5 603.7,711.5" fill="none" stroke="#4a4a4a" stroke-width="1"/>
<polyline points="597.2,715 599.7,712 602.2,715" fill="none" stroke="#4a4a4a" stroke-width="1"/>
<path d="M599.7,712 V715 Q595.2,717.5 599.7,720.2 M599.7,722.6 Q595.2,725 599.7,727.8 V732" fill="none" stroke="#444" stroke-width="0.9"/>
<ellipse cx="600.0" cy="721.4" rx="2.8" ry="1.5" fill="none" stroke="#444" stroke-width="0.9"/>
<polyline points="597.2,729 599.7,732 602.2,729" fill="none" stroke="#4a4a4a" stroke-width="1"/>
<path d="M595.7,733 Q599.7,738 603.7,733" fill="none" stroke="#4a4a4a" stroke-width="1"/>
<text x="611.7" y="698.0" text-anchor="start" fill="#5270c0" font-size="7">LEFT</text>
<text x="611.7" y="706.8" text-anchor="start" fill="#5270c0" font-size="7">FRONT</text>
<text x="611.7" y="715.6" text-anchor="start" fill="#5270c0" font-size="7">FENDER</text>
<text x="611.7" y="724.4" text-anchor="start" fill="#5270c0" font-size="7">LAMP</text>
<text x="611.7" y="733.2" text-anchor="start" fill="#5270c0" font-size="7">(DUAL</text>
<text x="611.7" y="742.0" text-anchor="start" fill="#5270c0" font-size="7">REAR</text>
<text x="611.7" y="750.8" text-anchor="start" fill="#5270c0" font-size="7">WHEELS)</text>
<text x="594.2" y="705.2" text-anchor="end" fill="#3a3a3a" font-size="7">1</text>
<text x="594.2" y="744.0" text-anchor="end" fill="#3a3a3a" font-size="7">2</text>
<text x="597.7" y="675.3" text-anchor="end" fill="#3a3a3a" font-size="7">WHT/</text>
<text x="597.7" y="684.0" text-anchor="end" fill="#3a3a3a" font-size="7">YEL</text>
<text x="595.2" y="759.5" text-anchor="end" fill="#3a3a3a" font-size="7">BLK</text>
<line x1="599.7" y1="737" x2="599.7" y2="768" stroke="#555" stroke-width="1.5"/>
<line x1="599.7" y1="770" x2="599.7" y2="776" stroke="#555" stroke-width="1.5" stroke-dasharray="3,2"/>
<circle cx="657.8" cy="721.8" r="10.3" fill="none" stroke="#444" stroke-width="1"/>
<path d="M653.8,711.5 Q657.8,706.5 661.8,711.5" fill="none" stroke="#4a4a4a" stroke-width="1"/>
<polyline points="655.3,715 657.8,712 660.3,715" fill="none" stroke="#4a4a4a" stroke-width="1"/>
<path d="M657.8,712 V715 Q653.3,717.5 657.8,720.2 M657.8,722.6 Q653.3,725 657.8,727.8 V732" fill="none" stroke="#444" stroke-width="0.9"/>
<ellipse cx="658.0999999999999" cy="721.4" rx="2.8" ry="1.5" fill="none" stroke="#444" stroke-width="0.9"/>
<polyline points="655.3,729 657.8,732 660.3,729" fill="none" stroke="#4a4a4a" stroke-width="1"/>
<path d="M653.8,733 Q657.8,738 661.8,733" fill="none" stroke="#4a4a4a" stroke-width="1"/>
<text x="669.8" y="696.8" text-anchor="start" fill="#5270c0" font-size="7">RIGHT</text>
<text x="669.8" y="705.6" text-anchor="start" fill="#5270c0" font-size="7">REAR</text>
<text x="669.8" y="714.4" text-anchor="start" fill="#5270c0" font-size="7">FENDER</text>
<text x="669.8" y="723.2" text-anchor="start" fill="#5270c0" font-size="7">LAMP</text>
<text x="669.8" y="732.0" text-anchor="start" fill="#5270c0" font-size="7">(DUAL</text>
<text x="669.8" y="740.8" text-anchor="start" fill="#5270c0" font-size="7">REAR</text>
<text x="669.8" y="749.6" text-anchor="start" fill="#5270c0" font-size="7">WHEELS)</text>
<text x="652.3" y="705.2" text-anchor="end" fill="#3a3a3a" font-size="7">1</text>
<text x="652.3" y="744.0" text-anchor="end" fill="#3a3a3a" font-size="7">2</text>
<text x="655.8" y="675.3" text-anchor="end" fill="#3a3a3a" font-size="7">WHT/</text>
<text x="655.8" y="684.0" text-anchor="end" fill="#3a3a3a" font-size="7">YEL</text>
<text x="653.3" y="759.5" text-anchor="end" fill="#3a3a3a" font-size="7">BLK</text>
<line x1="657.8" y1="737" x2="657.8" y2="767" stroke="#555" stroke-width="1.5"/>
<circle cx="728.4" cy="721.8" r="10.3" fill="none" stroke="#444" stroke-width="1"/>
<path d="M724.4,711.5 Q728.4,706.5 732.4,711.5" fill="none" stroke="#4a4a4a" stroke-width="1"/>
<polyline points="725.9,715 728.4,712 730.9,715" fill="none" stroke="#4a4a4a" stroke-width="1"/>
<path d="M728.4,712 V715 Q723.9,717.5 728.4,720.2 M728.4,722.6 Q723.9,725 728.4,727.8 V732" fill="none" stroke="#444" stroke-width="0.9"/>
<ellipse cx="728.6999999999999" cy="721.4" rx="2.8" ry="1.5" fill="none" stroke="#444" stroke-width="0.9"/>
<polyline points="725.9,729 728.4,732 730.9,729" fill="none" stroke="#4a4a4a" stroke-width="1"/>
<path d="M724.4,733 Q728.4,738 732.4,733" fill="none" stroke="#4a4a4a" stroke-width="1"/>
<text x="740.4" y="697.5" text-anchor="start" fill="#5270c0" font-size="7">RIGHT</text>
<text x="740.4" y="706.3" text-anchor="start" fill="#5270c0" font-size="7">FRONT</text>
<text x="740.4" y="715.1" text-anchor="start" fill="#5270c0" font-size="7">FENDER</text>
<text x="740.4" y="723.9" text-anchor="start" fill="#5270c0" font-size="7">LAMP</text>
<text x="740.4" y="732.7" text-anchor="start" fill="#5270c0" font-size="7">(DUAL</text>
<text x="740.4" y="741.5" text-anchor="start" fill="#5270c0" font-size="7">REAR</text>
<text x="740.4" y="750.3" text-anchor="start" fill="#5270c0" font-size="7">WHEELS)</text>
<text x="722.9" y="705.2" text-anchor="end" fill="#3a3a3a" font-size="7">1</text>
<text x="722.9" y="744.0" text-anchor="end" fill="#3a3a3a" font-size="7">2</text>
<text x="726.4" y="675.3" text-anchor="end" fill="#3a3a3a" font-size="7">WHT/</text>
<text x="726.4" y="684.0" text-anchor="end" fill="#3a3a3a" font-size="7">YEL</text>
<text x="723.9" y="759.5" text-anchor="end" fill="#3a3a3a" font-size="7">BLK</text>
<line x1="728.4" y1="737" x2="728.4" y2="768" stroke="#555" stroke-width="1.5"/>
<line x1="728.4" y1="770" x2="728.4" y2="776" stroke="#555" stroke-width="1.5" stroke-dasharray="3,2"/>
<circle cx="810.2" cy="721.8" r="10.3" fill="none" stroke="#444" stroke-width="1"/>
<path d="M806.2,711.5 Q810.2,706.5 814.2,711.5" fill="none" stroke="#4a4a4a" stroke-width="1"/>
<polyline points="807.7,715 810.2,712 812.7,715" fill="none" stroke="#4a4a4a" stroke-width="1"/>
<path d="M810.2,712 V715 Q805.7,717.5 810.2,720.2 M810.2,722.6 Q805.7,725 810.2,727.8 V732" fill="none" stroke="#444" stroke-width="0.9"/>
<ellipse cx="810.5" cy="721.4" rx="2.8" ry="1.5" fill="none" stroke="#444" stroke-width="0.9"/>
<polyline points="807.7,729 810.2,732 812.7,729" fill="none" stroke="#4a4a4a" stroke-width="1"/>
<path d="M806.2,733 Q810.2,738 814.2,733" fill="none" stroke="#4a4a4a" stroke-width="1"/>
<text x="822.5" y="717.0" text-anchor="start" fill="#5270c0" font-size="7">TAILGATE</text>
<text x="822.5" y="725.2" text-anchor="start" fill="#5270c0" font-size="7">BAR</text>
<text x="822.5" y="733.4" text-anchor="start" fill="#5270c0" font-size="7">LAMP</text>
<text x="806" y="705.5" text-anchor="end" fill="#3a3a3a" font-size="7">1</text>
<text x="806" y="744.1" text-anchor="end" fill="#3a3a3a" font-size="7">2</text>
<text x="809" y="675.1" text-anchor="end" fill="#3a3a3a" font-size="7">WHT/</text>
<text x="809" y="684.1" text-anchor="end" fill="#3a3a3a" font-size="7">YEL</text>
<text x="806" y="754.1" text-anchor="end" fill="#3a3a3a" font-size="7">BLK</text>
<line x1="810.2" y1="737" x2="810.2" y2="775" stroke="#555" stroke-width="1.5"/>
<polyline points="540.5,767 599.7,767" fill="none" stroke="#555" stroke-width="1.5"/>
<text x="595" y="775.5" text-anchor="end" fill="#3a3a3a" font-size="7">S340</text>
<polyline points="657.8,766.5 728.4,766.5" fill="none" stroke="#555" stroke-width="1.5"/>
<text x="733" y="769.0" text-anchor="start" fill="#3a3a3a" font-size="7">S341</text>
<text x="733" y="778.5" text-anchor="start" fill="#3a3a3a" font-size="7">(BEHIND</text>
<circle cx="154.5" cy="109.5" r="1.9" fill="#000"/>
<circle cx="154.5" cy="129.3" r="1.9" fill="#000"/>
<circle cx="224.5" cy="112.4" r="1.9" fill="#000"/>
<circle cx="224.5" cy="126.3" r="1.9" fill="#000"/>
<circle cx="505.5" cy="112.4" r="1.9" fill="#000"/>
<circle cx="505.5" cy="126.3" r="1.9" fill="#000"/>
<circle cx="599.5" cy="112.4" r="1.9" fill="#000"/>
<circle cx="599.5" cy="126.3" r="1.9" fill="#000"/>
<circle cx="716.5" cy="112.4" r="1.9" fill="#000"/>
<circle cx="716.5" cy="126.3" r="1.9" fill="#000"/>
<circle cx="224.5" cy="137.5" r="1.9" fill="#000"/>
<circle cx="224.5" cy="156.2" r="1.9" fill="#000"/>
<circle cx="224.5" cy="182.3" r="1.9" fill="#000"/>
<circle cx="271.5" cy="159.2" r="1.9" fill="#000"/>
<circle cx="283.1" cy="179.2" r="1.9" fill="#000"/>
<circle cx="280.0" cy="174.5" r="1.2" fill="#000"/>
<circle cx="259.5" cy="179" r="1.9" fill="#000"/>
<circle cx="505.5" cy="137.5" r="1.9" fill="#000"/>
<circle cx="505.5" cy="156.2" r="1.9" fill="#000"/>
<circle cx="505.5" cy="182.3" r="1.9" fill="#000"/>
<circle cx="552.5" cy="159.2" r="1.9" fill="#000"/>
<circle cx="564.1" cy="179.2" r="1.9" fill="#000"/>
<circle cx="561.0" cy="174.5" r="1.2" fill="#000"/>
<circle cx="540.5" cy="179" r="1.9" fill="#000"/>
<circle cx="599.5" cy="137.5" r="1.9" fill="#000"/>
<circle cx="599.5" cy="156.2" r="1.9" fill="#000"/>
<circle cx="599.5" cy="182.3" r="1.9" fill="#000"/>
<circle cx="646.5" cy="159.2" r="1.9" fill="#000"/>
<circle cx="658.1" cy="179.2" r="1.9" fill="#000"/>
<circle cx="655.0" cy="174.5" r="1.2" fill="#000"/>
<circle cx="634.5" cy="179" r="1.9" fill="#000"/>
<circle cx="259.5" cy="239.5" r="1.9" fill="#000"/>
<circle cx="365.5" cy="239.5" r="1.9" fill="#000"/>
<circle cx="259.5" cy="249.5" r="1.9" fill="#000"/>
<circle cx="259.5" cy="263.5" r="1.9" fill="#000"/>
<circle cx="365.5" cy="249.5" r="1.9" fill="#000"/>
<circle cx="365.5" cy="263.5" r="1.9" fill="#000"/>
<circle cx="494.5" cy="249.5" r="1.9" fill="#000"/>
<circle cx="494.5" cy="263.5" r="1.9" fill="#000"/>
<circle cx="716.6" cy="347" r="1.9" fill="#000"/>
<circle cx="727.5" cy="366.8" r="1.9" fill="#000"/>
<circle cx="705" cy="366.8" r="1.9" fill="#000"/>
<circle cx="259.5" cy="368.3" r="2.5" fill="#000"/>
<circle cx="365" cy="368.3" r="2.5" fill="#000"/>
<circle cx="247.8" cy="444.5" r="1.9" fill="#000"/>
<circle cx="353" cy="444.5" r="1.9" fill="#000"/>
<circle cx="247.8" cy="497.4" r="2.2" fill="#000"/>
<circle cx="353" cy="485.8" r="2.5" fill="#000"/>
<circle cx="247.8" cy="497.5" r="1.8" fill="#000"/>
<circle cx="353" cy="507.5" r="1.8" fill="#000"/>
<circle cx="458.8" cy="532.8" r="2.5" fill="#000"/>
<circle cx="658" cy="532.8" r="2.5" fill="#000"/>
<circle cx="247.5" cy="731.8" r="2.5" fill="#000"/>
<circle cx="540.5" cy="661.8" r="2.5" fill="#000"/>
<circle cx="62" cy="697" r="1.8" fill="#000"/>
<circle cx="62" cy="708.3" r="1.8" fill="#000"/>
<circle cx="62" cy="720" r="1.8" fill="#000"/>
<circle cx="62" cy="732" r="1.8" fill="#000"/>
<circle cx="62" cy="743" r="1.8" fill="#000"/>
<circle cx="62" cy="754.5" r="1.8" fill="#000"/>
<circle cx="62" cy="767" r="1.8" fill="#000"/>
<circle cx="42.5" cy="708" r="1.8" fill="#000"/>
<circle cx="42.5" cy="743" r="1.8" fill="#000"/>
<circle cx="88.7" cy="708.3" r="1.5" fill="#000"/>
<circle cx="117.5" cy="708.3" r="1.5" fill="#000"/>
<circle cx="91.5" cy="720" r="1.5" fill="#000"/>
<circle cx="117.5" cy="720" r="1.5" fill="#000"/>
<circle cx="117.5" cy="767" r="1.5" fill="#000"/>
<circle cx="599.7" cy="767" r="2.5" fill="#000"/>
<circle cx="728.4" cy="766.5" r="2.5" fill="#000"/>
</svg></div>
</body></html>
